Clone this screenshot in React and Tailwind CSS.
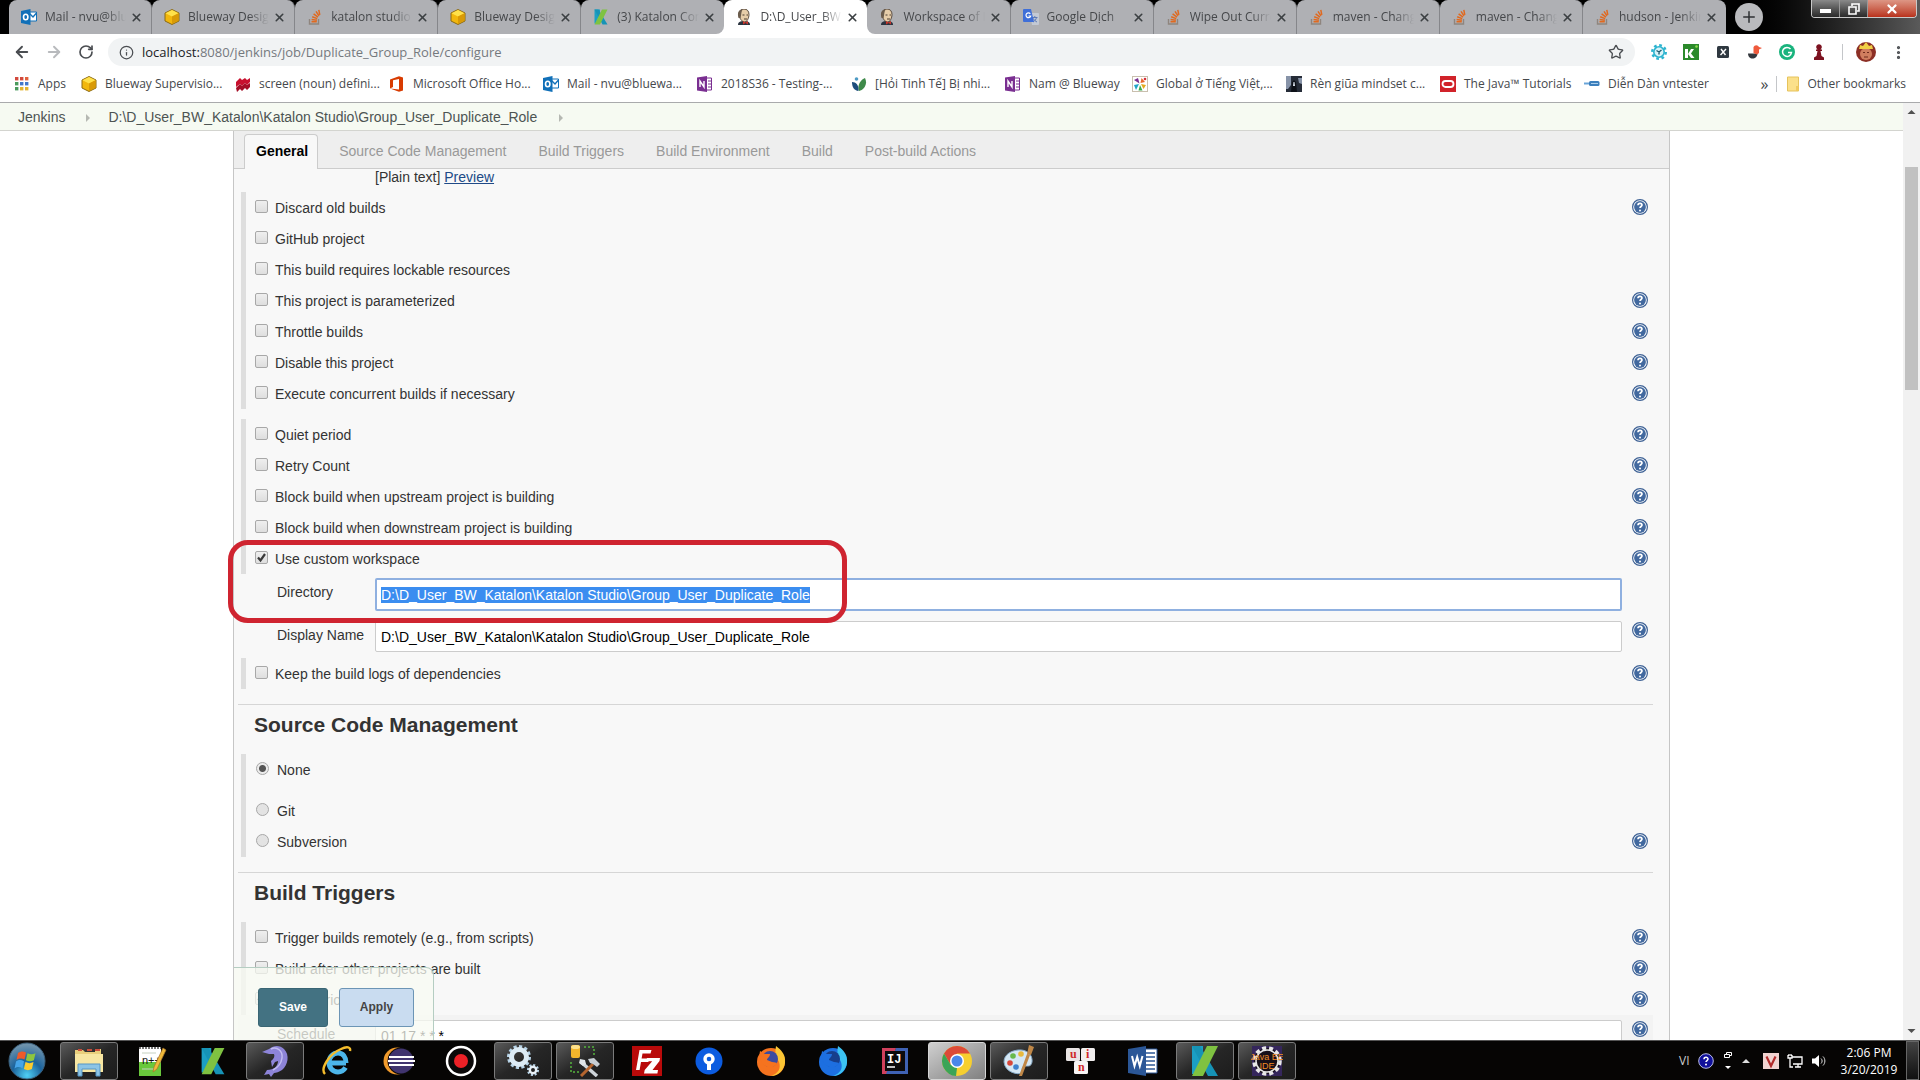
import { useEffect, useRef } from 'react'
import {
  ArrowLeft,
  ArrowRight,
  RotateCw,
  Info,
  Star,
  X,
  Plus,
  EllipsisVertical,
} from 'lucide-react'

const WORKSPACE = 'D:\\D_User_BW_Katalon\\Katalon Studio\\Group_User_Duplicate_Role'

/* ---------- Small icons (favicons, bookmarks) ---------- */

const Outlook = () => (
  <svg viewBox="0 0 16 16" className="size-4 shrink-0">
    <path d="M8 3h7.500v9H8z" fill="#fff" stroke="#1170b8" />
    <path d="M8 4l4 4 3.500-4" fill="none" stroke="#1170b8" strokeWidth="1.400" />
    <path d="M0 2l9.500-2v16L0 14z" fill="#1170b8" />
    <ellipse cx="4.700" cy="8" rx="2.200" ry="2.800" fill="none" stroke="#fff" strokeWidth="1.600" />
  </svg>
)

const Cube = () => (
  <svg viewBox="0 0 16 16" className="size-4 shrink-0">
    <path d="M8 .5l7 3.500v8L8 15.500 1 12V4z" fill="#f2b70d" stroke="#8a6a14" />
    <path d="M8 1l6.500 3.200L8 7.500 1.500 4.200z" fill="#ffe14a" />
    <path d="M8 7.500l6.500-3.300v7.600L8 15z" fill="#d99a06" />
  </svg>
)

const Stack = () => (
  <svg viewBox="0 0 16 16" className="size-4 shrink-0" fill="none">
    <path d="M2.500 10v5h9v-5" stroke="#8f857e" strokeWidth="1.400" />
    <path d="M4.500 12.800h5.300M4.600 10.400l5.300.8M5.200 7.700l5 1.900M6.600 4.900l4.400 3.200M9 2.300l3 4.500M11.800.8l1 5" stroke="#e0691f" strokeWidth="1.500" />
  </svg>
)

const Katalon = ({ className }) => (
  <svg viewBox="0 0 32 32" className={className}>
    <path d="M3 1h11v9L5 29H3z" fill="#1b9fc4" />
    <path d="M3 1h8l18 30H19z" fill="#1693b6" />
    <path d="M18 1h11L14 31H3z" fill="#7fc241" />
  </svg>
)

const Butler = () => (
  <svg viewBox="0 0 16 16" className="size-4 shrink-0">
    <path d="M2 16c0-3 2-4 6-4s6 1 6 4z" fill="#2b3440" />
    <path d="M3 5c0-3 2-5 5-5s5 2 5 5.500S11 13 8.500 13 3 9 3 5z" fill="#e6cda9" stroke="#4a3c31" strokeWidth=".9" />
    <path d="M2.500 9C1 4 2.500.3 7 .3 5 2 5.500 6 4.500 9z" fill="#6b5c4c" />
    <path d="M6.500 6h2M10.500 6H12M8 10h3" stroke="#4a3c31" />
    <path d="M7 12l2.500 1.500L12 12v3.500L9.500 14 7 15.500z" fill="#c8352b" />
  </svg>
)

const Translate = () => (
  <svg viewBox="0 0 16 16" className="size-4 shrink-0">
    <path d="M7 4h8a1 1 0 0 1 1 1v10a1 1 0 0 1-1 1H9z" fill="#c3c9d4" />
    <path d="M9 8.500h5.500M11.800 7v1.500M13.500 8.500c-.5 2-1.500 3.500-3.500 4.500M10.500 9.500c.5 1.500 1.500 2.500 3.500 3.500" stroke="#5e7bb5" fill="none" />
    <path d="M1 0h7l3 13H1a1 1 0 0 1-1-1V1a1 1 0 0 1 1-1z" fill="#3f6fd8" />
    <path d="M7.300 4.800A2.400 2.400 0 1 0 7.700 7H5.500" stroke="#fff" strokeWidth="1.200" fill="none" />
  </svg>
)

const AppsGrid = () => (
  <svg viewBox="0 0 16 16" className="size-4 shrink-0">
    {['#d2493c', '#d2493c', '#e0603c', '#4a9a5c', '#4377c9', '#4377c9', '#4a9a5c', '#e3b32f', '#e3b32f'].map((fill, i) => (
      <rect key={i} x={1 + (i % 3) * 5} y={1 + Math.floor(i / 3) * 5} width="3.400" height="3.400" fill={fill} />
    ))}
  </svg>
)

const Macmillan = () => (
  <svg viewBox="0 0 16 16" className="size-4 shrink-0">
    <path d="M1 6l4-4 2 2 3-2 2 2 3-2v4l-3 3-2-2-3 3-2-2-4 3z" fill="#c8102e" />
    <path d="M1 12l4-4 2 2 3-3 2 2 3-2v4l-3 3-2-2-3 3-2-2-3 3z" fill="#a50d26" />
  </svg>
)

const Office = () => (
  <svg viewBox="0 0 16 16" className="size-4 shrink-0">
    <path d="M1 3.500L10 .3l4 1.200v13L10 15.800 1 12.500l9 1V3L4 4.300V11l-3 1.500z" fill="#d83b01" />
  </svg>
)

const OneNote = () => (
  <svg viewBox="0 0 16 16" className="size-4 shrink-0">
    <path d="M9 2h5.500v12H9z" fill="#fff" stroke="#7a2f91" />
    <path d="M11 5h4M11 8h4M11 11h4" stroke="#7a2f91" />
    <path d="M0 1.500L10 0v16L0 14.500z" fill="#7a2f91" />
    <path d="M3 11V5l4 6V5" stroke="#fff" strokeWidth="1.400" fill="none" />
  </svg>
)

const Leaf = () => (
  <svg viewBox="0 0 16 16" className="size-4 shrink-0">
    <path d="M14 2c3 6-1 12-6 13-2-5 1-11 6-13z" fill="#3f8a4a" />
    <path d="M1 6c4 0 7 3 6.500 9C3 14.500 1 11 1 6z" fill="#1d4d7c" />
    <circle cx="5.500" cy="3" r="1.800" fill="#4e9bc4" />
  </svg>
)

const Pinwheel = () => (
  <svg viewBox="0 0 16 16" className="size-4 shrink-0">
    <rect x=".5" y=".5" width="15" height="15" fill="#fff" stroke="#c9bfae" />
    <path d="M7.500 7.500L2 4l4-2z" fill="#7a2f91" />
    <path d="M8.500 7l1-5 3.500 4z" fill="#e8662b" />
    <path d="M9 8l5 1-2.500 4z" fill="#e3a91d" />
    <path d="M8 9l2.500 5.500h-4z" fill="#3bab4c" />
    <path d="M7 8l-3 6-2-5z" fill="#22a5c9" />
    <circle cx="13" cy="3" r="1.300" fill="#d4303c" />
  </svg>
)

const Photo = () => (
  <svg viewBox="0 0 16 16" className="size-4 shrink-0">
    <path d="M0 0h16v16H0z" fill="#262c38" />
    <path d="M0 0h5v9l-3 4H0zM12 2h4v6l-3-1z" fill="#8793a8" />
    <path d="M6 6l2-2 2 2 1 10H5z" fill="#0d1017" />
    <path d="M7.500 6h1l.5 4h-2z" fill="#dce3ee" />
  </svg>
)

const Oracle = () => (
  <svg viewBox="0 0 16 16" className="size-4 shrink-0">
    <path d="M0 0h16v16H0z" fill="#d1232a" />
    <rect x="2.500" y="5" width="11" height="6" rx="3" fill="none" stroke="#fff" strokeWidth="1.800" />
  </svg>
)

const Tester = () => (
  <svg viewBox="0 0 16 16" className="size-4 shrink-0">
    <path d="M0 6.500h7v2H0z" fill="#6aa5d8" />
    <rect x="5" y="5" width="10.500" height="5" rx="1.500" fill="#3c7fbc" />
    <path d="M7 7.500h7" stroke="#a9cdea" />
  </svg>
)

const FolderIcon = () => (
  <svg viewBox="0 0 16 16" className="size-4 shrink-0">
    <path d="M2.500 1h11v14h-11z" fill="#fbe08a" stroke="#e6c35c" />
    <path d="M11 10h2.500v5H11z" fill="#f1ca5f" />
  </svg>
)

/* ---------- Extension icons ---------- */

const extensions = [
  <svg viewBox="0 0 16 16" className="size-4">
    <circle cx="8" cy="8" r="6.800" fill="none" stroke="#2bb3cf" strokeWidth="2.400" strokeDasharray="2.700 2.640" />
    <circle cx="8" cy="8" r="5.200" fill="#d7f3f8" stroke="#2bb3cf" strokeWidth="1.600" />
    <path d="M5.500 6.500L8 8l2.500-2M8 8v2.500" stroke="#1d5c70" strokeWidth="1.400" fill="none" />
  </svg>,
  <svg viewBox="0 0 16 16" className="size-4">
    <path d="M0 0h16v16H0z" fill="#2b8a2b" />
    <path d="M2 5h3v9H2z M5 10l3-5h3L8 9.500 11.500 14H8z" fill="#fff" />
    <circle cx="13.500" cy="2.500" r="1.300" fill="#8fe04d" />
  </svg>,
  <svg viewBox="0 0 16 16" className="size-4">
    <rect x="2" y="2" width="12" height="12" rx="1.500" fill="#2f3840" />
    <path d="M6 5l4.500 6M11 5l-5.500 6" stroke="#fff" strokeWidth="1.400" />
  </svg>,
  <svg viewBox="0 0 16 16" className="size-4">
    <path d="M1 9.500h9.500c0 3-2.500 5-5 5S1 12.500 1 9.500z" fill="#33373d" />
    <path d="M6.500 3A3 3 0 0 1 12 3l3 1-3 1.500V9l-2 1.500L6.500 9z" fill="#ef5a3c" />
  </svg>,
  <svg viewBox="0 0 16 16" className="size-4">
    <circle cx="8" cy="8" r="8" fill="#19b37d" />
    <path d="M11.500 5A4.500 4.500 0 1 0 12.500 8.500H9" stroke="#fff" strokeWidth="1.500" fill="none" />
  </svg>,
  <svg viewBox="0 0 16 16" className="size-4">
    <path d="M3 16v-2.500l2.500-1.500 1-5H5V5.500h1.500a2.800 2.800 0 1 1 3 0H11V7H9.500l1 5 2.500 1.500V16z" fill="#7c1220" />
  </svg>,
]

/* ---------- Taskbar icons ---------- */

const Explorer = () => (
  <svg viewBox="0 0 32 32" className="size-8">
    <path d="M2 5h8l2 2h10V4h6v22H2z" fill="#e9cf7c" />
    <path d="M2 9h28v18H2z" fill="#f7e6a2" />
    <path d="M5 5h4M14 5h5M22 5h5" stroke="#c94e3c" strokeWidth="2" />
    <path d="M5 31V19h22v12h-4v-7H9v7z" fill="#8cc4e6" stroke="#5796c4" />
  </svg>
)

const NotepadPlus = () => (
  <svg viewBox="0 0 32 32" className="size-8">
    <path d="M4 2h22v29H4z" fill="#fff" />
    <path d="M4 17h22v14H4z" fill="#69c83c" />
    <path d="M4 3h22" stroke="#777" strokeWidth="2" strokeDasharray="2 1" />
    <path d="M7 8h14M7 24h12" stroke="#c5d0c0" />
    <text x="7" y="19" fontSize="11" fontFamily="Liberation Sans, sans-serif" fill="#111">n++</text>
    <path d="M28 3l3 2-9 19-4 3 1-5z" fill="#efb93a" stroke="#a8732a" strokeWidth=".7" />
  </svg>
)

const Dolphin = () => (
  <svg viewBox="0 0 32 32" className="size-8">
    <path d="M3 7l7-3c5-4 11-4 15 0 6 6 4 16-2 21-3 2-6 3-8 3l-3 4-2-3-5 1 3-5c7 0 11-4 11-9l-3 1-3 5-1-6c3-2 4-5 3-7l-5 0z" fill="#8d84d8" />
    <path d="M12 4c6-3 12 2 11 9-1 7-5 10-9 12" stroke="#c2bdf2" strokeWidth="1.500" fill="none" />
  </svg>
)

const InternetExplorer = () => (
  <svg viewBox="0 0 32 32" className="size-8" fill="none">
    <path d="M25 18H10M25 18c0-6-3-10-8-10s-9 4-9 9.500S12 27 17 27c4 0 6-2 7.500-4.500" stroke="#4cb6ea" strokeWidth="5" />
    <path d="M4 29C-1 24 8 9 20 4c6-3 10-2 9 2" stroke="#f5bd2c" strokeWidth="2.400" />
  </svg>
)

const Eclipse = () => (
  <svg viewBox="0 0 32 32" className="size-8">
    <circle cx="14" cy="16" r="13.500" fill="#f09a2c" />
    <circle cx="18" cy="16" r="13.500" fill="#0b0a0a" />
    <circle cx="18" cy="16" r="12.500" fill="#40346f" />
    <path d="M6 12h25M5 16h27M6 20h25" stroke="#fff" strokeWidth="2" />
  </svg>
)

const Recorder = () => (
  <svg viewBox="0 0 32 32" className="size-8">
    <circle cx="16" cy="16" r="14" fill="#0b0909" stroke="#fff" strokeWidth="2.500" />
    <circle cx="16" cy="16" r="7" fill="#ed2127" />
  </svg>
)

const Gears = () => (
  <svg viewBox="0 0 32 32" className="size-8" fill="none">
    <circle cx="12" cy="12" r="10" stroke="#b7d4e8" strokeWidth="4" strokeDasharray="3 2.200" />
    <circle cx="12" cy="12" r="7.500" stroke="#dcebf5" strokeWidth="5" />
    <circle cx="26" cy="25" r="4.800" stroke="#b7d4e8" strokeWidth="2.500" strokeDasharray="2 1.700" />
    <circle cx="26" cy="25" r="3.200" stroke="#e8f1f8" strokeWidth="2.400" />
  </svg>
)

const Tools = () => (
  <svg viewBox="0 0 32 32" className="size-8">
    <rect x="2" y="0" width="9" height="13" rx="2" fill="#f3b52c" />
    <ellipse cx="6.500" cy="2" rx="4.500" ry="2" fill="#fde08c" />
    <path d="M15 2h10v9M2 17v10h9" stroke="#55b53e" strokeWidth="1.500" strokeDasharray="2 2" fill="none" />
    <path d="M12 17l16 14" stroke="#cfd5da" strokeWidth="3.500" />
    <path d="M11 14l5 1 1 4-3 2-4-3z" fill="#dfe4e8" />
    <path d="M12 31l12-12" stroke="#b5652f" strokeWidth="3" />
    <path d="M19 14l6-1 6 6-3 3-4-3-3-1z" fill="#c7ced4" />
  </svg>
)

const FileZilla = () => (
  <svg viewBox="0 0 32 32" className="size-8">
    <path d="M1 1h30v30H1z" fill="#b90a0a" />
    <path d="M5 25L8.500 5h12l-1 3.500h-8l-.9 5H18l-.6 3.500H10L8.600 25z" fill="#fff" />
    <path d="M16 13h13l-.5 3-7 9h5.500l-.6 3.500H13l.7-3.500 7.500-8.700h-6z" fill="#fff" />
  </svg>
)

const SourceTree = () => (
  <svg viewBox="0 0 32 32" className="size-8">
    <circle cx="16" cy="16" r="13.500" fill="#0c5ce0" />
    <circle cx="16" cy="14" r="4" fill="none" stroke="#fff" strokeWidth="3.400" />
    <path d="M14 17h4v8h-4z" fill="#fff" />
  </svg>
)

const Firefox = ({ outer, tail, globe }) => (
  <svg viewBox="0 0 32 32" className="size-8">
    <circle cx="16" cy="17" r="14" fill={outer} />
    <path d="M21 1c5 4 10 8 9 17-1 7-7 13-14 13 8-3 10-8 8-14-1-3-5-6-3-16z" fill={tail} />
    <circle cx="15" cy="14" r="8" fill={globe} />
    <path d="M5 6l5 3 5 0c0 3-3 4-3 6l5 2c3 0 4 1 5 1-2 5-9 6-13 2-4-3-5-9-4-14z" fill={outer} />
  </svg>
)

const IntelliJ = () => (
  <svg viewBox="0 0 32 32" className="size-8">
    <path d="M3 3h14l-6 26H3z" fill="#d0405c" />
    <path d="M17 3h12v26H7z" fill="#3f62b4" />
    <path d="M6 6h20v20H6z" fill="#0b0a0c" />
    <text x="8" y="18" fontSize="12" fontWeight="700" fontFamily="Liberation Mono, monospace" fill="#fff">IJ</text>
    <path d="M8 22h8" stroke="#fff" strokeWidth="1.500" />
  </svg>
)

const Chrome = () => (
  <svg viewBox="0 0 32 32" className="size-8">
    <circle cx="16" cy="16" r="15" fill="#f7cf2f" />
    <path d="M3 8.500A15 15 0 0 1 29 8.500H16l-6.500 11z" fill="#dc4a38" />
    <path d="M3 8.500L9.500 19.500 16 23l-1 8A15 15 0 0 1 3 8.500z" fill="#3ba457" />
    <circle cx="16" cy="16" r="7" fill="#fff" />
    <circle cx="16" cy="16" r="5.500" fill="#4a86ea" />
  </svg>
)

const Paint = () => (
  <svg viewBox="0 0 32 32" className="size-8">
    <path d="M15 5c9-1 15 5 14 12-1 5-4 4-7 4-4 0-2 4-4 7-2 2-16 0-17-11C1 10 7 6 15 5z" fill="#d5e8f5" stroke="#87aac6" />
    <circle cx="7" cy="18" r="2.800" fill="#d8473a" />
    <circle cx="10" cy="11" r="2.800" fill="#67b94c" />
    <circle cx="18" cy="9" r="2.800" fill="#e8b93d" />
    <circle cx="13" cy="22" r="2.800" fill="#3f83cf" />
    <path d="M26 0l5 2-3 8-4-1zM24 9l3 1-8 21-3 0z" fill="#c08848" />
  </svg>
)

const Unikey = () => (
  <svg viewBox="0 0 32 32" className="size-8" fontSize="12" fontWeight="700" fontFamily="Liberation Serif, serif">
    <rect x="1" y="3" width="14" height="13" rx="1.500" fill="#e9e5e5" />
    <rect x="16" y="3" width="14" height="13" rx="1.500" fill="#f2efef" />
    <rect x="9" y="16" width="14" height="13" rx="1.500" fill="#f7f5f5" />
    <text x="5" y="13" fill="#cf2a2a">u</text>
    <text x="21" y="13" fill="#cf2a2a">i</text>
    <text x="13" y="26" fill="#cf2a2a">n</text>
  </svg>
)

const Word = () => (
  <svg viewBox="0 0 32 32" className="size-8">
    <path d="M17 4h13v24H17z" fill="#fff" stroke="#2b5797" />
    <path d="M19 8h9M19 12h9M19 16h9M19 20h9M19 24h9" stroke="#2b5797" strokeWidth="1.500" />
    <path d="M1 4l18-3v30L1 28z" fill="#2b5797" />
    <path d="M5 11l2.500 10L10.200 12l2.600 9L15.500 11" stroke="#fff" strokeWidth="2" fill="none" />
  </svg>
)

const JavaEE = () => (
  <svg viewBox="0 0 32 32" className="size-8">
    <path d="M1 1h30v30H1z" fill="#35265c" />
    <circle cx="16" cy="16" r="13" fill="#171019" stroke="#e8e8e8" strokeWidth="3.500" strokeDasharray="4 3" />
    <circle cx="16" cy="16" r="11" fill="#171019" stroke="#e8e8e8" strokeWidth="1.500" />
    <text x="16" y="15" textAnchor="middle" fontSize="9" fontFamily="Liberation Sans, sans-serif" fill="#f08a24">Java EE</text>
    <text x="16" y="24" textAnchor="middle" fontSize="9" fontFamily="Liberation Sans, sans-serif" fill="#f08a24">IDE</text>
  </svg>
)

const StartOrb = () => (
  <svg viewBox="0 0 40 40" className="size-10">
    <defs>
      <radialGradient id="orb" cx="50%" cy="90%" r="85%">
        <stop offset="0" stopColor="#4fd0f5" />
        <stop offset=".5" stopColor="#1b639c" />
        <stop offset="1" stopColor="#6f93ac" />
      </radialGradient>
    </defs>
    <circle cx="20" cy="20" r="18" fill="url(#orb)" stroke="#3b5f7a" />
    <path d="M11 12c3-2 5-2 8-.5l-1.500 7c-3-1.500-5-1.500-8 .3z" fill="#ee5a2a" />
    <path d="M20.500 12.200c3 1.500 5 1.500 8 0l-1.600 7c-3 1.500-5 1.500-8 0z" fill="#8dc63f" />
    <path d="M9 20.500c3-2 5-1.800 8-.3l-1.500 7c-3-1.500-5-1.500-8 .3z" fill="#46a5e8" />
    <path d="M18.500 21c3 1.500 5 1.500 8 0l-1.600 7c-3 1.500-5 1.500-8 0z" fill="#fccb2e" />
  </svg>
)

/* ---------- Data ---------- */

const tabs = [
  { title: 'Mail - nvu@bluewa', icon: <Outlook /> },
  { title: 'Blueway Designer', icon: <Cube /> },
  { title: 'katalon studio - ', icon: <Stack /> },
  { title: 'Blueway Designer', icon: <Cube /> },
  { title: '(3) Katalon Comm', icon: <Katalon className="size-4 shrink-0" />, side: 'left' },
  { title: 'D:\\D_User_BW_K', icon: <Butler />, active: true },
  { title: 'Workspace of D', icon: <Butler />, side: 'right' },
  { title: 'Google Dịch', icon: <Translate /> },
  { title: 'Wipe Out Current', icon: <Stack /> },
  { title: 'maven - Change', icon: <Stack /> },
  { title: 'maven - Change', icon: <Stack /> },
  { title: 'hudson - Jenkins', icon: <Stack /> },
]

const bookmarks = [
  { label: 'Apps', icon: <AppsGrid />, width: 'w-[67px]' },
  { label: 'Blueway Supervisio...', icon: <Cube />, width: 'w-[154px]' },
  { label: 'screen (noun) defini...', icon: <Macmillan />, width: 'w-[154px]' },
  { label: 'Microsoft Office Ho...', icon: <Office />, width: 'w-[154px]' },
  { label: 'Mail - nvu@bluewa...', icon: <Outlook />, width: 'w-[154px]' },
  { label: '2018S36 - Testing-...', icon: <OneNote />, width: 'w-[154px]' },
  { label: '[Hỏi Tinh Tế] Bị nhi...', icon: <Leaf />, width: 'w-[154px]' },
  { label: 'Nam @ Blueway', icon: <OneNote />, width: 'w-[127px]' },
  { label: 'Global ở Tiếng Việt,...', icon: <Pinwheel />, width: 'w-[154px]' },
  { label: 'Rèn giũa mindset c...', icon: <Photo />, width: 'w-[154px]' },
  { label: 'The Java™ Tutorials', icon: <Oracle />, width: 'w-[144px]' },
  { label: 'Diễn Dàn vntester', icon: <Tester />, width: 'w-[154px]' },
]

const configTabs = ['General', 'Source Code Management', 'Build Triggers', 'Build Environment', 'Build', 'Post-build Actions']

const generalOptions = [
  { label: 'Discard old builds', help: true },
  { label: 'GitHub project' },
  { label: 'This build requires lockable resources' },
  { label: 'This project is parameterized', help: true },
  { label: 'Throttle builds', help: true },
  { label: 'Disable this project', help: true },
  { label: 'Execute concurrent builds if necessary', help: true },
]

const advancedOptions = [
  { label: 'Quiet period', help: true },
  { label: 'Retry Count', help: true },
  { label: 'Block build when upstream project is building', help: true },
  { label: 'Block build when downstream project is building', help: true },
  { label: 'Use custom workspace', help: true, checked: true },
]

const triggerOptions = [
  { label: 'Trigger builds remotely (e.g., from scripts)', help: true },
  { label: 'Build after other projects are built', help: true },
  { label: 'Build periodically', help: true, checked: true },
]

const taskbar = [
  { name: 'Windows Explorer', icon: <Explorer />, open: true },
  { name: 'Notepad++', icon: <NotepadPlus /> },
  { name: 'Katalon', icon: <Katalon className="size-7" /> },
  { name: 'MySQL', icon: <Dolphin />, open: true },
  { name: 'Internet Explorer', icon: <InternetExplorer /> },
  { name: 'Eclipse', icon: <Eclipse /> },
  { name: 'Recorder', icon: <Recorder /> },
  { name: 'Services', icon: <Gears />, open: true },
  { name: 'Database tools', icon: <Tools />, open: true },
  { name: 'FileZilla', icon: <FileZilla /> },
  { name: 'Sourcetree', icon: <SourceTree /> },
  { name: 'Firefox', icon: <Firefox outer="#f5731f" tail="#fbc534" globe="#3b4ba0" /> },
  { name: 'Firefox Developer', icon: <Firefox outer="#1d6fe0" tail="#3cc3f2" globe="#173f8c" /> },
  { name: 'IntelliJ IDEA', icon: <IntelliJ /> },
  { name: 'Chrome', icon: <Chrome />, current: true },
  { name: 'Paint', icon: <Paint />, open: true },
  { name: 'UniKey', icon: <Unikey /> },
  { name: 'Word', icon: <Word /> },
  { name: 'Katalon Studio', icon: <Katalon className="size-8" />, open: true },
  { name: 'Eclipse Java EE', icon: <JavaEE />, open: true },
]

/* ---------- Browser chrome ---------- */

const TabStrip = () => (
  <div className="flex h-[34px] bg-black pl-[9px]">
    <div className="grid flex-1 grid-cols-12">
      {tabs.map((tab, i) => (
        <div key={i} className={tab.side ? 'bg-linear-to-b from-black from-50% to-white to-50%' : ''}>
          <div
            className={`flex h-full items-center rounded-t-lg pl-3 pr-2
              ${tab.active ? 'bg-white' : 'bg-[#afb0b4]'}
              ${tab.side === 'left' ? 'rounded-br-lg' : ''}
              ${tab.side === 'right' ? 'rounded-bl-lg' : ''}
              ${tab.active || tab.side === 'left' || i === 11 ? '' : 'border-r border-[#85868a]'}`}
          >
            {tab.icon}
            <span className="ml-2 flex-1 overflow-hidden whitespace-nowrap text-[12px] leading-4 text-[#45474a] mask-r-from-75%">
              {tab.title}
            </span>
            <button aria-label="Close tab" className="ml-1 text-[#3c4043]">
              <X size={13} strokeWidth={3} />
            </button>
          </div>
        </div>
      ))}
    </div>
    <div className="flex w-[194px] items-start justify-between bg-linear-to-r from-black via-[#1c1c1c] to-[#5a5a5a] pl-[9px] pr-[3px]">
      <button aria-label="New tab" className="mt-[3px] flex size-7 items-center justify-center rounded-full bg-[#b9babd] text-[#2e3033]">
        <Plus size={18} />
      </button>
      <div className="flex h-[18px] overflow-hidden rounded-b border border-t-0 border-[#c9c9c9]">
        <button aria-label="Minimize" className="flex w-7 items-center justify-center border-r border-[#999] bg-linear-to-b from-[#8a8a8a] to-[#2a2a2a]">
          <span className="mt-1 h-[4px] w-[11px] bg-white" />
        </button>
        <button aria-label="Restore" className="flex w-7 items-center justify-center border-r border-[#999] bg-linear-to-b from-[#8a8a8a] to-[#2a2a2a]">
          <svg viewBox="0 0 12 12" className="size-3" fill="none" stroke="#fff" strokeWidth="1.600">
            <path d="M4 3V1h7v7H9M1 4h7v7H1z" />
          </svg>
        </button>
        <button aria-label="Close" className="flex w-12 items-center justify-center bg-linear-to-b from-[#dd9685] to-[#b8301a] text-white">
          <X size={14} strokeWidth={4} />
        </button>
      </div>
    </div>
  </div>
)

const Toolbar = () => (
  <div className="flex h-9 items-center bg-white px-[6px] text-[#4a4d51]">
    <button aria-label="Back" className="flex w-8 justify-center"><ArrowLeft size={18} strokeWidth={2.5} /></button>
    <button aria-label="Forward" className="flex w-8 justify-center text-[#b8babd]"><ArrowRight size={18} strokeWidth={2.5} /></button>
    <button aria-label="Reload" className="flex w-8 justify-center"><RotateCw size={16} strokeWidth={2.5} /></button>
    <div className="ml-[6px] mr-2 flex h-7 flex-1 items-center rounded-full bg-[#f1f3f4] px-[11px]">
      <Info size={15} />
      <div className="ml-2 flex-1 text-[13px] leading-5 text-[#75797e]">
        <span className="text-[#202124]">localhost:</span>8080/jenkins/job/Duplicate_Group_Role/configure
      </div>
      <button aria-label="Bookmark this page"><Star size={16} /></button>
    </div>
    {extensions.map((icon, i) => (
      <button key={i} aria-label="Extension" className="flex w-8 justify-center">{icon}</button>
    ))}
    <div className="mx-[7px] h-4 w-px bg-[#c4c6c9]" />
    <button aria-label="Profile" className="flex w-8 justify-center">
      <svg viewBox="0 0 20 20" className="size-5">
        <circle cx="10" cy="10" r="10" fill="#8c2f25" />
        <circle cx="10" cy="12" r="6" fill="#d07e5f" />
        <path d="M3 7l1-4 3 1 3-4 3 4 3-1 1 4z" fill="#f0cf45" />
        <path d="M7 10.500h2M11 10.500h2M8 15h4" stroke="#6d2a1d" strokeWidth="1.200" />
      </svg>
    </button>
    <button aria-label="Menu" className="flex w-8 justify-center"><EllipsisVertical size={17} strokeWidth={2.5} /></button>
  </div>
)

const BookmarksBar = () => (
  <div className="flex h-[33px] items-center border-b border-[#a9aaac] bg-white px-[14px] pb-1 text-[12px] leading-4 text-[#45484c]">
    {bookmarks.map((b) => (
      <a key={b.label} href="#" className={`flex items-center gap-2 whitespace-nowrap ${b.width}`}>
        {b.icon}
        {b.label}
      </a>
    ))}
    <button aria-label="More bookmarks" className="ml-auto text-base leading-4">»</button>
    <div className="mx-2 h-4 w-px bg-[#c4c6c9]" />
    <a href="#" className="flex items-center gap-[6px] whitespace-nowrap">
      <FolderIcon />
      Other bookmarks
    </a>
  </div>
)

/* ---------- Jenkins page ---------- */

const Help = ({ className = '' }) => (
  <a href="#" aria-label="Help" className={`shrink-0 ${className}`}>
    <svg viewBox="0 0 16 16" className="size-4">
      <circle cx="8" cy="8" r="7.400" fill="#fff" stroke="#3f6295" strokeWidth="1.200" />
      <circle cx="8" cy="8" r="5.900" fill="#42699f" />
      <path d="M6 6.300c0-2.600 4-2.600 4-.2 0 1.400-2 1.500-2 3" fill="none" stroke="#fff" strokeWidth="1.700" />
      <circle cx="8" cy="11.400" r="1" fill="#fff" />
    </svg>
  </a>
)

const Option = ({ label, help, checked }) => (
  <div className="flex h-[31px] items-start justify-between pl-[9px] pr-[5px]">
    <label className="flex items-start gap-[7px]">
      <span className="relative mt-2 block size-[13px]">
        <input
          type="checkbox"
          defaultChecked={checked}
          className="peer block size-[13px] appearance-none rounded-[2px] border border-[#a8a8a8] bg-linear-to-b from-[#efefef] to-[#dedede]"
        />
        <svg viewBox="0 0 13 13" className="pointer-events-none absolute inset-0 hidden peer-checked:block">
          <path d="M3 6.500l2.500 3L10 3" fill="none" stroke="#3a3a3a" strokeWidth="2.200" />
        </svg>
      </span>
      <span className="leading-[33px]">{label}</span>
    </label>
    {help && <Help className="mt-[7px]" />}
  </div>
)

const ScmOption = ({ label, help, checked }) => (
  <div className="flex h-[31px] items-start justify-between pl-[10px] pr-[5px]">
    <label className="flex items-start gap-2">
      <input
        type="radio"
        name="scm"
        defaultChecked={checked}
        className="mt-2 size-[13px] appearance-none rounded-full border border-[#a8a8a8] bg-[#e3e3e3] checked:bg-[radial-gradient(circle,#555_3px,#ececec_4px)]"
      />
      <span className="leading-[33px]">{label}</span>
    </label>
    {help && <Help className="mt-[7px]" />}
  </div>
)

const OptionGroup = ({ options, className = '' }) => (
  <div className={`ml-[3px] border-l-[5px] border-[#dedede] ${className}`}>
    {options.map((o) => <Option key={o.label} {...o} />)}
  </div>
)

const Field = ({ id, label, help, children, className = '' }) => (
  <div className={`flex items-start pr-[5px] ${className}`}>
    <label htmlFor={id} className="w-[137px] shrink-0 pl-[39px] leading-7">{label}</label>
    {children}
    <div className="ml-[10px] mt-px w-4 shrink-0">{help && <Help />}</div>
  </div>
)

const SectionTitle = ({ children }) => (
  <h2 className="mb-[9px] mt-[15px] border-t border-[#d6d6d6] pl-4 text-[21px] font-bold leading-10 text-[#333]">
    {children}
  </h2>
)

const ConfigForm = () => {
  const directoryRef = useRef(null)

  useEffect(() => {
    directoryRef.current.focus({ preventScroll: true })
    directoryRef.current.select()
  }, [])

  return (
    <form className="pl-1 pr-4" onSubmit={(e) => e.preventDefault()}>
      <div className="h-[23px] pl-[137px] leading-4">
        [Plain text] <a href="#" className="text-[#204a87] underline">Preview</a>
      </div>

      <OptionGroup options={generalOptions} />
      <OptionGroup options={advancedOptions} className="mt-[10px]" />

      <div className="relative">
        <Field id="directory" label="Directory" className="pt-[4px]">
          <input
            id="directory"
            ref={directoryRef}
            defaultValue={WORKSPACE}
            className="h-[33px] min-w-0 flex-1 rounded-[2px] border-2 border-[#8fb0e0] bg-white px-1 text-black outline-none selection:bg-[#3b8df0] selection:text-white"
          />
        </Field>
        {/* Highlight around the custom workspace setting */}
        <div className="pointer-events-none absolute -left-[10px] -top-[34px] h-[83px] w-[619px] rounded-[20px] border-[5px] border-[#cf2430]" />
      </div>

      <Field id="display-name" label="Display Name" help className="pt-[10px]">
        <input
          id="display-name"
          defaultValue={WORKSPACE}
          className="h-[31px] min-w-0 flex-1 rounded-[2px] border border-[#ccc] bg-white px-[5px] text-black outline-none"
        />
      </Field>
      <OptionGroup options={[{ label: 'Keep the build logs of dependencies', help: true }]} className="mt-[6px]" />

      <SectionTitle>Source Code Management</SectionTitle>
      <div className="ml-[3px] border-l-[5px] border-[#dedede]">
        <div className="pb-[10px]">
          <ScmOption label="None" checked />
        </div>
        <ScmOption label="Git" />
        <ScmOption label="Subversion" help />
      </div>

      <SectionTitle>Build Triggers</SectionTitle>
      <OptionGroup options={triggerOptions} />
      <div className="bg-[#f3f3f3] pt-[5px]">
        <Field id="schedule" label="Schedule" help>
          <input
            id="schedule"
            defaultValue="01 17 * * *"
            className="h-[31px] min-w-0 flex-1 rounded-[2px] border border-[#ccc] bg-white px-[5px] text-black outline-none"
          />
        </Field>
      </div>
    </form>
  )
}

const Crumb = () => (
  <svg viewBox="0 0 8 8" className="size-2"><path d="M2 0l4 4-4 4z" fill="#b5b8b2" /></svg>
)

const JenkinsPage = () => (
  <div className="flex min-w-0 flex-1 flex-col font-['Liberation_Sans',Arial,sans-serif] text-[14px] text-[#333]">
    <nav className="flex h-7 shrink-0 items-center border-b border-[#d3d4cf] bg-[#f6faf2] pl-[18px] pt-[2px] text-[#4d5452]">
      <a href="#" className="mr-[19px]">Jenkins</a>
      <Crumb />
      <a href="#" className="ml-4 mr-5">{WORKSPACE}</a>
      <Crumb />
    </nav>

    <main className="min-h-0 flex-1 overflow-hidden bg-white px-[233px]">
      <div className="relative h-full border-x border-[#c6c6c6] bg-[#f8f8f8]">
        <div className="flex h-[38px] items-end border-b border-[#ccc] bg-[#eee] pl-[10px] text-[#999]">
          {configTabs.map((name, i) => (
            <button
              key={name}
              className={i === 0
                ? '-mb-px mr-[5px] h-[35px] rounded-t border border-b-0 border-[#ccc] bg-[#f8f8f8] pb-[2px] pl-[11px] pr-[9px] font-bold text-black'
                : 'h-[34px] px-4'}
            >
              {name}
            </button>
          ))}
        </div>
        <ConfigForm />
        <div className="absolute bottom-0 left-0 flex h-[73px] w-[200px] items-start gap-[11px] rounded-tr-lg border-r border-t border-[#b5cdc2] bg-[#f8fbf3]/75 pl-6 pt-5 text-[12px] font-bold">
          <button className="h-[39px] w-[70px] rounded-[3px] border border-[#3a6674] bg-[#437282] pb-px text-white">Save</button>
          <button className="h-[39px] w-[75px] rounded-[3px] border border-[#6c95b5] bg-[#c9dcf0] pb-px text-[#444]">Apply</button>
        </div>
      </div>
    </main>
  </div>
)

const Scrollbar = () => (
  <div className="flex w-[17px] shrink-0 flex-col items-center bg-[#f1f1f1] text-[#505050]">
    <svg viewBox="0 0 17 17" className="size-[17px]"><path d="M4.500 11l4-4 4 4z" fill="currentColor" /></svg>
    <div className="mt-[47px] h-[223px] w-[13px] bg-[#c1c1c1]" />
    <svg viewBox="0 0 17 17" className="mt-auto size-[17px]"><path d="M4.500 6l4 4 4-4z" fill="currentColor" /></svg>
  </div>
)

/* ---------- Windows taskbar ---------- */

const Taskbar = () => (
  <footer className="flex h-10 shrink-0 items-center border-t border-[#555] bg-[#060504] text-white">
    <button aria-label="Start" className="mx-[7px] flex w-10 justify-center"><StartOrb /></button>
    <div className="ml-[6px] flex gap-1">
      {taskbar.map((app) => (
        <button
          key={app.name}
          aria-label={app.name}
          className={`flex h-[38px] w-[58px] items-center justify-center rounded-[3px] border
            ${app.current ? 'border-[#d5d5d5] bg-linear-to-br from-[#d0d0d0] to-[#808080]' : ''}
            ${app.open ? 'border-[#7b7b7b] bg-linear-to-br from-[#5a5a5a] via-[#262626] to-[#1c1c1c]' : ''}
            ${app.current || app.open ? '' : 'border-transparent'}`}
        >
          {app.icon}
        </button>
      ))}
    </div>
    <div className="ml-auto flex h-full items-center">
      <span className="w-[18px] text-[12px] text-[#ccc]">VI</span>
      <svg viewBox="0 0 16 16" className="ml-px size-4">
        <circle cx="8" cy="8" r="7.300" fill="#10109a" stroke="#b9bde8" />
        <path d="M6 6.300c0-2.600 4-2.600 4-.2 0 1.400-2 1.500-2 3" fill="none" stroke="#fff" strokeWidth="1.500" />
        <circle cx="8" cy="11.500" r="1" fill="#fff" />
      </svg>
      <svg viewBox="0 0 10 20" className="ml-[9px] h-5 w-[10px]" fill="none" stroke="#fff">
        <path d="M3.500 3V1.500h5v3H7M1.500 3.500h5v3h-5z" />
        <path d="M2 15l3 3 3-3z" fill="#fff" stroke="none" />
      </svg>
      <svg viewBox="0 0 8 8" className="ml-[9px] size-2"><path d="M0 6l4-4 4 4z" fill="#ddd" /></svg>
      <svg viewBox="0 0 16 16" className="ml-[13px] size-4">
        <path d="M0 0h16v16H0z" fill="#f1d3d0" />
        <path d="M3.500 3.500L8 13l4.500-9.500" fill="none" stroke="#b22a2a" strokeWidth="2.200" />
      </svg>
      <svg viewBox="0 0 16 16" className="ml-2 size-4" fill="none" stroke="#fff" strokeWidth="1.300">
        <path d="M5 4h10v7H6M8 14h6M11 11v3M1 2v3h4V2M2 1v2M4 1v2M3 5v9h3" />
      </svg>
      <svg viewBox="0 0 16 16" className="ml-2 mr-[5px] size-4">
        <path d="M1 5.500h3L8 2v12l-4-3.500H1z" fill="#fff" />
        <path d="M10 5.500c1.500 1.500 1.500 3.500 0 5M12 3.500c2.500 2.500 2.500 6.500 0 9" fill="none" stroke="#ddd" />
      </svg>
      <div className="w-[74px] text-center text-[12px] leading-[17px]">
        <div>2:06 PM</div>
        <div>3/20/2019</div>
      </div>
      <button aria-label="Show desktop" className="mr-px h-full w-[13px] border border-[#666] bg-linear-to-b from-[#444] to-[#111]" />
    </div>
  </footer>
)

export default function App() {
  return (
    <div className="flex h-screen flex-col overflow-hidden font-['Open_Sans','Noto_Sans',sans-serif]">
      <header className="shrink-0">
        <TabStrip />
        <Toolbar />
        <BookmarksBar />
      </header>
      <div className="flex min-h-0 flex-1">
        <JenkinsPage />
        <Scrollbar />
      </div>
      <Taskbar />
    </div>
  )
}
